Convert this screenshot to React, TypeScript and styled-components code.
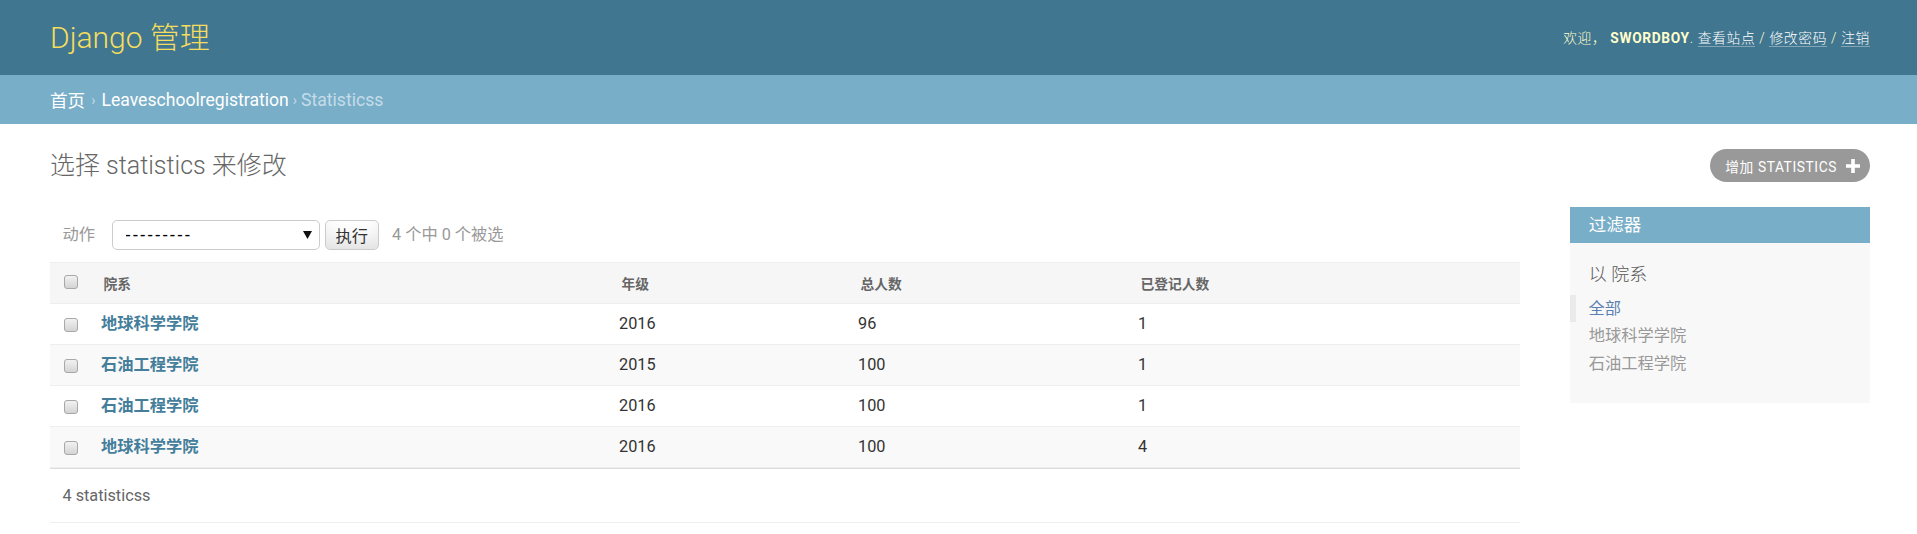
import React from "react";
import styled, { createGlobalStyle } from "styled-components";

const GlobalStyle = createGlobalStyle`
  html, body {
    margin: 0;
    padding: 0;
    background: #fff;
    overflow: hidden;
  }
  body {
    font-family: Roboto, "Noto Sans CJK SC", "DejaVu Sans", sans-serif;
    font-size: 17.5px;
    color: #333;
  }
  * { box-sizing: border-box; }
`;

const Header = styled.header`
  height: 75px;
  padding: 12.5px 47px 12.5px 50px;
  background: #417690;
  display: flex;
  justify-content: space-between;
  align-items: center;
  color: #ffc;
`;

const Brand = styled.h1`
  margin: 0;
  font-size: 30px;
  font-weight: 300;
  line-height: 50px;
  color: #f5dd5d;
`;

const UserTools = styled.div`
  font-size: 13.75px;
  letter-spacing: 0.65px;
  font-weight: 300;
  line-height: 50px;
  color: #ffc;
  strong {
    font-weight: 700;
    text-transform: uppercase;
  }
`;

const ToolLink = styled.a`
  color: #fff;
  text-decoration: none;
  border-bottom: 1px solid rgba(255, 255, 255, 0.35);
`;

const Crumbs = styled.nav`
  height: 49px;
  padding: 0 50px;
  background: #79aec8;
  display: flex;
  align-items: center;
  font-size: 17.6px;
  color: #c4dce8;
  a {
    color: #fff;
    text-decoration: none;
  }
`;

const Sep = styled.span`
  font-size: 14px;
  margin: 0 ${(p) => (p.$tight ? "4px" : "6px")};
`;

const Content = styled.main`
  padding: 25px 47px 0 50px;
`;

const TitleRow = styled.div`
  height: 33px;
  margin-bottom: 25px;
  display: flex;
  justify-content: space-between;
  align-items: center;
`;

const Title = styled.h1`
  margin: 0;
  font-size: 25px;
  font-weight: 300;
  line-height: 33px;
  color: #666;
`;

const AddLink = styled.a`
  display: flex;
  align-items: center;
  gap: 9px;
  height: 33px;
  padding: 0 10px 0 15px;
  border-radius: 18px;
  background: #999;
  color: #fff;
  font-size: 13.75px;
  letter-spacing: 0.6px;
  text-transform: uppercase;
  text-decoration: none;
`;

const Main = styled.div`
  display: flex;
  align-items: flex-start;
  gap: 50px;
`;

const Results = styled.div`
  flex: 1;
  min-width: 0;
`;

const Actions = styled.div`
  padding: 12.5px;
  height: 55px;
  display: flex;
  align-items: center;
  color: #999;
  font-size: 16.25px;
  line-height: 30px;
`;

const ActionLabel = styled.label`
  margin-right: 16.5px;
`;

const SelectWrap = styled.div`
  position: relative;
  width: 208px;
  height: 30px;
`;

const Select = styled.select`
  appearance: none;
  width: 100%;
  height: 30px;
  padding: 0 0 0 13px;
  border: 1px solid #ccc;
  border-radius: 5px;
  background: #fff;
  color: #000;
  font-family: Roboto, sans-serif;
  font-size: 17.5px;
  letter-spacing: 2.6px;
`;

const Arrow = styled.svg`
  position: absolute;
  right: 8px;
  top: 11px;
  pointer-events: none;
`;

const GoButton = styled.button`
  height: 30px;
  margin-left: 5px;
  padding: 0 10px;
  border: 1px solid #ccc;
  border-radius: 5px;
  background: #fff;
  box-shadow: 0 -18px 25px -12px rgba(0, 0, 0, 0.15) inset;
  color: #333;
  font-family: Roboto, "Noto Sans CJK SC", sans-serif;
  font-size: 16.25px;
`;

const Counter = styled.span`
  margin-left: 13px;
  color: #999;
`;

const Table = styled.table`
  width: 100%;
  border-collapse: collapse;
  table-layout: fixed;
`;

const HeadCell = styled.th`
  height: 41px;
  padding: 0 12.5px;
  background: #f6f6f6;
  border-top: 1px solid #eee;
  border-bottom: 1px solid #eee;
  text-align: ${(p) => (p.$center ? "center" : "left")};
  vertical-align: middle;
  font-size: 13.75px;
  font-weight: 600;
  color: #666;
`;

const Row = styled.tr`
  background: ${(p) => (p.$alt ? "#f9f9f9" : "#fff")};
`;

const Cell = styled.td`
  padding: 10px;
  height: 41px;
  border-bottom: 1px solid #eee;
  vertical-align: top;
  font-size: 16.25px;
  line-height: 20px;
  color: #333;
  text-align: ${(p) => (p.$center ? "center" : "left")};
`;

const NameCell = styled.th`
  padding: 10px;
  border-bottom: 1px solid #eee;
  vertical-align: top;
  text-align: left;
  font-size: 16.25px;
  line-height: 20px;
  font-weight: 600;
  a {
    color: #447e9b;
    text-decoration: none;
  }
`;

const Check = styled.span`
  display: inline-block;
  width: 14px;
  height: 14px;
  margin-top: ${(p) => (p.$head ? "-4px" : "0")};
  vertical-align: middle;
  border: 1px solid #a8a8a8;
  border-radius: 3px;
  background: linear-gradient(#f2f2f2, #d4d4d4);
`;

const Paginator = styled.p`
  margin: 0;
  padding: 12.5px;
  line-height: 27.5px;
  font-size: 16.25px;
  color: #666;
  border-top: 1px solid #ddd;
  border-bottom: 1px solid #eee;
`;

const Filter = styled.aside`
  width: 300px;
  background: #f8f8f8;
`;

const FilterTitle = styled.h2`
  margin: 0;
  height: 36px;
  padding: 0 18.75px;
  line-height: 36px;
  background: #79aec8;
  color: #fff;
  font-size: 17.5px;
  font-weight: 400;
`;

const FilterHeading = styled.h3`
  margin: 21px 0 8.75px;
  padding: 0 18.75px;
  line-height: 22px;
  font-size: 18px;
  font-weight: 300;
  color: #555;
`;

const FilterList = styled.ul`
  margin: 6.25px 0 0;
  padding: 0 18.75px 26px;
  list-style: none;
`;

const FilterItem = styled.li`
  font-size: 16.25px;
  line-height: 27.5px;
  margin-left: ${(p) => (p.$selected ? "-18.75px" : "0")};
  padding-left: ${(p) => (p.$selected ? "12.5px" : "0")};
  border-left: ${(p) => (p.$selected ? "6.25px solid #eaeaea" : "none")};
  a {
    color: ${(p) => (p.$selected ? "#5b80b2" : "#999")};
    text-decoration: none;
  }
`;

const rows = [
  { name: "地球科学学院", grade: "2016", total: "96", reg: "1" },
  { name: "石油工程学院", grade: "2015", total: "100", reg: "1" },
  { name: "石油工程学院", grade: "2016", total: "100", reg: "1" },
  { name: "地球科学学院", grade: "2016", total: "100", reg: "4" },
];

export default function App() {
  return (
    <>
      <GlobalStyle />
      <Header>
        <Brand>Django 管理</Brand>
        <UserTools>
          欢迎， <strong>swordboy</strong>. <ToolLink href="#">查看站点</ToolLink> /{" "}
          <ToolLink href="#">修改密码</ToolLink> / <ToolLink href="#">注销</ToolLink>
        </UserTools>
      </Header>
      <Crumbs>
        <a href="#">首页</a>
        <Sep>›</Sep>
        <a href="#">Leaveschoolregistration</a>
        <Sep $tight>›</Sep>
        <span>Statisticss</span>
      </Crumbs>
      <Content>
        <TitleRow>
          <Title>选择 statistics 来修改</Title>
          <AddLink href="#">
            增加 statistics
            <svg width="14" height="14" viewBox="0 0 14 14">
              <path d="M5.2 0h3.6v5.2H14v3.6H8.8V14H5.2V8.8H0V5.2h5.2z" fill="#fff" />
            </svg>
          </AddLink>
        </TitleRow>
        <Main>
          <Results>
            <Actions>
              <ActionLabel>动作</ActionLabel>
              <SelectWrap>
                <Select defaultValue="">
                  <option value="">---------</option>
                </Select>
                <Arrow width="9" height="8" viewBox="0 0 9 8">
                  <path d="M0 0h9L4.5 8z" fill="#111" />
                </Arrow>
              </SelectWrap>
              <GoButton type="button">执行</GoButton>
              <Counter>4 个中 0 个被选</Counter>
            </Actions>
            <Table>
              <colgroup>
                <col style={{ width: 41 }} />
                <col style={{ width: 518 }} />
                <col style={{ width: 239 }} />
                <col style={{ width: 280 }} />
                <col />
              </colgroup>
              <thead>
                <tr>
                  <HeadCell $center>
                    <Check $head />
                  </HeadCell>
                  <HeadCell>院系</HeadCell>
                  <HeadCell>年级</HeadCell>
                  <HeadCell>总人数</HeadCell>
                  <HeadCell>已登记人数</HeadCell>
                </tr>
              </thead>
              <tbody>
                {rows.map((r, i) => (
                  <Row key={i} $alt={i % 2 === 1}>
                    <Cell $center>
                      <Check />
                    </Cell>
                    <NameCell>
                      <a href="#">{r.name}</a>
                    </NameCell>
                    <Cell>{r.grade}</Cell>
                    <Cell>{r.total}</Cell>
                    <Cell>{r.reg}</Cell>
                  </Row>
                ))}
              </tbody>
            </Table>
            <Paginator>4 statisticss</Paginator>
          </Results>
          <Filter>
            <FilterTitle>过滤器</FilterTitle>
            <FilterHeading>以 院系</FilterHeading>
            <FilterList>
              <FilterItem $selected>
                <a href="#">全部</a>
              </FilterItem>
              <FilterItem>
                <a href="#">地球科学学院</a>
              </FilterItem>
              <FilterItem>
                <a href="#">石油工程学院</a>
              </FilterItem>
            </FilterList>
          </Filter>
        </Main>
      </Content>
    </>
  );
}
